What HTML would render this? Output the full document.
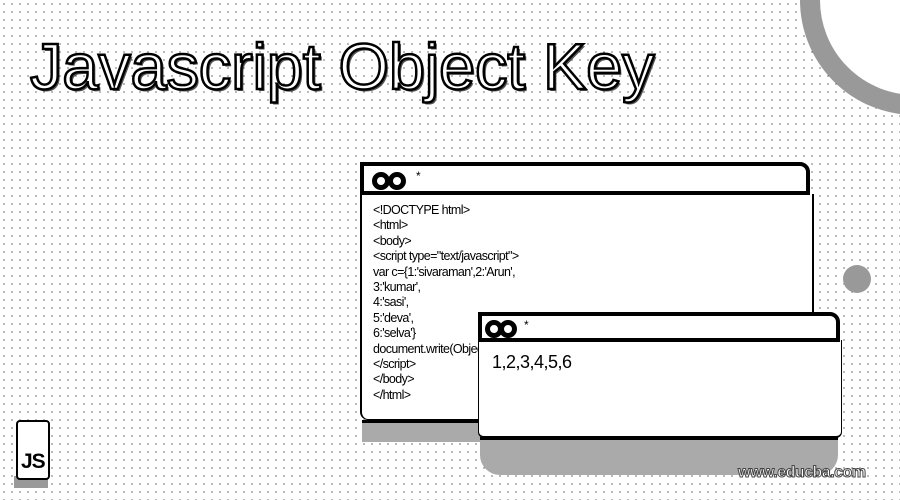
<!DOCTYPE html>
<html><head><meta charset="utf-8"><style>
*{margin:0;padding:0;box-sizing:border-box}
body{width:900px;height:500px;overflow:hidden;position:relative;background:#fff;font-family:"Liberation Sans",sans-serif;
background-image:radial-gradient(circle,#000 0.5px,transparent 0.8px);background-size:8px 8px;}
.title{position:absolute;left:30px;top:29px;font-size:65px;color:#fff;-webkit-text-stroke:2.5px #000;white-space:nowrap;text-shadow:2px 2px 0 #555;letter-spacing:-0.2px}
.arc{position:absolute;left:800px;top:-115px;width:230px;height:230px;border-radius:50%;border:20px solid #999;background:#fff}
.dot{position:absolute;left:843px;top:265px;width:28px;height:28px;border-radius:50%;background:#999}
.win{position:absolute;background:#fff}
.hdr{position:absolute;border:4px solid #000;border-radius:0 10px 0 0;background:#fff}
.ico{position:absolute;top:6px;left:8px;width:36px;height:18px}
.ico i{position:absolute;top:0;width:18px;height:18px;border-radius:50%;border:5px solid #000;background:#fff}
.code{position:absolute;left:373px;top:203px;font-size:12.5px;line-height:15.4px;color:#000;font-family:"Liberation Sans",sans-serif;letter-spacing:-0.6px}
.gray{position:absolute;background:#999}
</style></head><body>
<div class="arc"></div>
<div class="dot"></div>
<div class="title">Javascript Object Key</div>

<div class="gray" style="left:362px;top:420px;width:120px;height:22px;background:#aaa;border-top:3px solid #000"></div>
<div class="win" style="left:360px;top:194px;width:454px;height:226px;border-left:2px solid #000;border-right:2px solid #000;border-bottom:1px solid #000;border-radius:0 0 8px 8px"></div>
<div class="hdr" style="left:360px;top:162px;width:450px;height:33px">
<div class="ico"><i style="left:0"></i><i style="left:16px"></i></div>
<span style="position:absolute;left:52px;top:3px;font-size:12px">*</span></div>
<div class="code">&lt;!DOCTYPE html&gt;<br>&lt;html&gt;<br>&lt;body&gt;<br>&lt;script type="text/javascript"&gt;<br>var c={1:'sivaraman',2:'Arun',<br>3:'kumar',<br>4:'sasi',<br>5:'deva',<br>6:'selva'}<br>document.write(Object.keys(c));<br>&lt;/script&gt;<br>&lt;/body&gt;<br>&lt;/html&gt;</div>

<div class="gray" style="left:480px;top:437px;width:358px;height:38px;background:#aaa;border-top:3px solid #000;border-radius:0 0 20px 20px"></div>
<div class="win" style="left:478px;top:340px;width:364px;height:98px;border-left:1px solid #000;border-right:1px solid #000;border-bottom:2px solid #000;border-radius:0 0 6px 6px"></div>
<div class="hdr" style="left:478px;top:312px;width:362px;height:30px">
<div class="ico" style="top:4px;left:3px"><i style="left:0"></i><i style="left:14px"></i></div>
<span style="position:absolute;left:42px;top:2px;font-size:12px">*</span></div>
<div style="position:absolute;left:492px;top:352px;font-size:18px;letter-spacing:-0.5px">1,2,3,4,5,6</div>

<div style="position:absolute;left:14px;top:476px;width:34px;height:12px;background:#999"></div>
<div style="position:absolute;left:16px;top:420px;width:34px;height:60px;border:2px solid #000;border-radius:4px;background:#fff"></div>
<div style="position:absolute;left:21px;top:450px;font-size:21px;font-weight:bold;letter-spacing:-1px">JS</div>
<div style="position:absolute;left:738px;top:464px;font-size:16px;font-weight:bold;color:#fff;-webkit-text-stroke:1px #444;letter-spacing:-0.5px">www.educba.com</div>
</body></html>
